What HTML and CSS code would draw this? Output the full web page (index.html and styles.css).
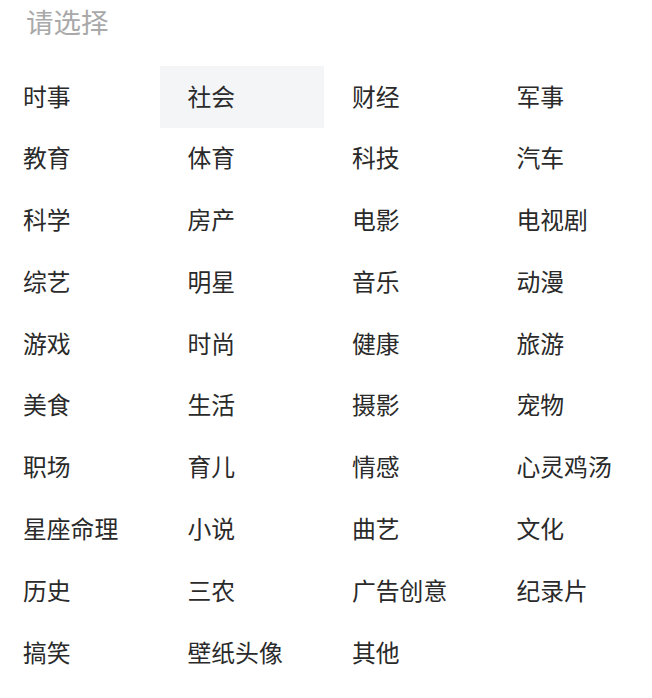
FILE: index.html
```html
<!DOCTYPE html>
<html lang="zh-CN">
<head>
<meta charset="utf-8">
<link rel="stylesheet" href="styles.css">
</head>
<body>
<div class="picker">
  <div class="placeholder">请选择</div>
  <ul class="options">
    <li class="option">时事</li>
    <li class="option is-hover">社会</li>
    <li class="option">财经</li>
    <li class="option">军事</li>
    <li class="option">教育</li>
    <li class="option">体育</li>
    <li class="option">科技</li>
    <li class="option">汽车</li>
    <li class="option">科学</li>
    <li class="option">房产</li>
    <li class="option">电影</li>
    <li class="option">电视剧</li>
    <li class="option">综艺</li>
    <li class="option">明星</li>
    <li class="option">音乐</li>
    <li class="option">动漫</li>
    <li class="option">游戏</li>
    <li class="option">时尚</li>
    <li class="option">健康</li>
    <li class="option">旅游</li>
    <li class="option">美食</li>
    <li class="option">生活</li>
    <li class="option">摄影</li>
    <li class="option">宠物</li>
    <li class="option">职场</li>
    <li class="option">育儿</li>
    <li class="option">情感</li>
    <li class="option">心灵鸡汤</li>
    <li class="option">星座命理</li>
    <li class="option">小说</li>
    <li class="option">曲艺</li>
    <li class="option">文化</li>
    <li class="option">历史</li>
    <li class="option">三农</li>
    <li class="option">广告创意</li>
    <li class="option">纪录片</li>
    <li class="option">搞笑</li>
    <li class="option">壁纸头像</li>
    <li class="option">其他</li>
  </ul>
</div>
</body>
</html>
```

FILE: styles.css
```css
html, body {
  margin: 0;
  padding: 0;
  background: #ffffff;
}

body {
  font-family: "Noto Sans CJK SC", "Noto Sans", sans-serif;
  color: #222222;
  overflow: hidden;
}

.picker {
  width: 652px;
}

.placeholder {
  height: 66px;
  box-sizing: border-box;
  padding: 3px 0 0 26px;
  font-size: 27.5px;
  line-height: 37px;
  color: #a9a9a9;
}

.options {
  list-style: none;
  margin: 0 0 0 -5px;
  padding: 0;
  display: grid;
  grid-template-columns: repeat(4, 164.5px);
  grid-auto-rows: 61.8px;
}

.option {
  display: flex;
  align-items: center;
  box-sizing: border-box;
  padding: 0 0 3px 28px;
  font-size: 23.8px;
  line-height: 1;
  color: #2a2a2a;
  white-space: nowrap;
}

.option.is-hover {
  background: #f4f5f7;
}
```
